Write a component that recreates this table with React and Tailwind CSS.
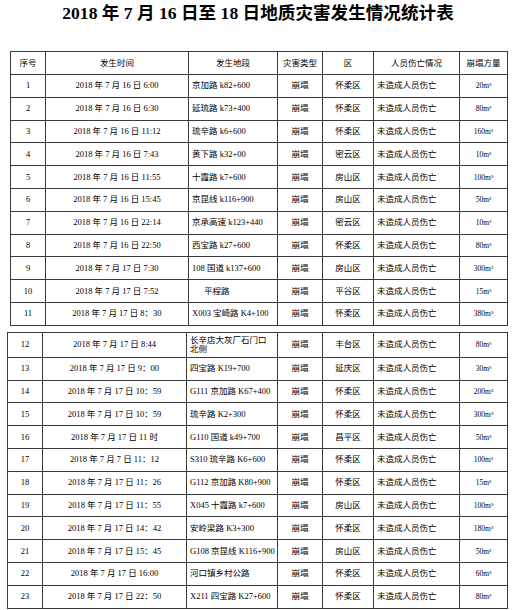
const cols1 = [35, 143, 89, 45, 51, 86, 48];
const cols2 = [35, 144, 91, 45, 51, 86, 48];

const head = ["序号", "发生时间", "发生地段", "灾害类型", "区", "人员伤亡情况", "崩塌方量"];

const rows1 = [
  ["1", "2018 年 7 月 16 日 6:00", "京加路 k82+600", "怀柔区", "20"],
  ["2", "2018 年 7 月 16 日 6:30", "延琉路 k73+400", "怀柔区", "80"],
  ["3", "2018 年 7 月 16 日 11:12", "琉辛路 k6+600", "怀柔区", "160"],
  ["4", "2018 年 7 月 16 日 7:43", "黄下路 k32+00", "密云区", "10"],
  ["5", "2018 年 7 月 16 日 11:55", "十霞路 k7+600", "房山区", "100"],
  ["6", "2018 年 7 月 16 日 15:45", "京昆线 k116+900", "房山区", "50"],
  ["7", "2018 年 7 月 16 日 22:14", "京承高速 k123+440", "密云区", "10"],
  ["8", "2018 年 7 月 16 日 22:50", "西宝路 k27+600", "怀柔区", "80"],
  ["9", "2018 年 7 月 17 日 7:30", "108 国道 k137+600", "房山区", "300"],
  ["10", "2018 年 7 月 17 日 7:52", "平程路", "平谷区", "15", true],
  ["11", "2018 年 7 月 17 日 8：30", "X003 宝崎路 K4+100", "怀柔区", "380"],
];

const rows2 = [
  ["12", "2018 年 7 月 17 日 8:44", "长辛店大灰厂石门口北侧", "丰台区", "80"],
  ["13", "2018 年 7 月 17 日 9：00", "四宝路 K19+700", "延庆区", "30"],
  ["14", "2018 年 7 月 17 日 10：59", "G111 京加路 K67+400", "怀柔区", "200"],
  ["15", "2018 年 7 月 17 日 10：59", "琉辛路 K2+300", "怀柔区", "300"],
  ["16", "2018 年 7 月 17 日 11 时", "G110 国道 k49+700", "昌平区", "50"],
  ["17", "2018 年 7 月 7 日 11：12", "S310 琉辛路 K6+600", "怀柔区", "100"],
  ["18", "2018 年 7 月 17 日 11：26", "G112 京加路 K80+900", "怀柔区", "15"],
  ["19", "2018 年 7 月 17 日 11：55", "X045 十霞路 k7+600", "房山区", "100"],
  ["20", "2018 年 7 月 17 日 14：42", "安岭梁路 K3+300", "怀柔区", "180"],
  ["21", "2018 年 7 月 17 日 15：45", "G108 京昆线 K116+900", "房山区", "50"],
  ["22", "2018 年 7 月 17 日 16:00", "河口镇乡村公路", "怀柔区", "60"],
  ["23", "2018 年 7 月 17 日 22：50", "X211 四宝路 K27+600", "怀柔区", "80"],
];

const td = "border border-[#3a3a3a] px-[3px] py-0 leading-[9px]";

function Table({ cols, rows, header, className }) {
  return (
    <table className={`table-fixed border-collapse ${className}`}>
      <colgroup>
        {cols.map((w, i) => (
          <col key={i} style={{ width: w }} />
        ))}
      </colgroup>
      <tbody>
        {header && (
          <tr className="h-[23px]">
            {head.map((h) => (
              <td key={h} className={`${td} text-center`}>
                {h}
              </td>
            ))}
          </tr>
        )}
        {rows.map((r) => (
          <tr key={r[0]} className={r[0] === "12" ? "h-[25px]" : "h-[22.8px]"}>
            <td className={`${td} text-center`}>{r[0]}</td>
            <td className={`${td} text-center whitespace-nowrap`}>{r[1]}</td>
            <td
              className={`${td} text-left ${r[0] === "12" ? "" : "whitespace-nowrap"} ${
                r[5] ? "pl-[15px]" : ""
              }`}
            >
              {r[2]}
            </td>
            <td className={`${td} text-center`}>崩塌</td>
            <td className={`${td} text-center`}>{r[3]}</td>
            <td className={`${td} text-left whitespace-nowrap`}>未造成人员伤亡</td>
            <td className={`${td} text-center text-[7.5px]`}>{r[4]}m³</td>
          </tr>
        ))}
      </tbody>
    </table>
  );
}

export default function App() {
  return (
    <div
      className="w-[516px] h-[610px] bg-white text-black text-[8.5px] overflow-hidden"
      style={{ fontFamily: '"Liberation Serif", "Noto Sans CJK SC", serif' }}
    >
      <h1 className="pt-[3px] h-[51px] text-center text-[17.6px] font-bold leading-[20px]">
        2018 年 7 月 16 日至 18 日地质灾害发生情况统计表
      </h1>
      <Table cols={cols1} rows={rows1} header className="ml-[10px] w-[497px]" />
      <Table cols={cols2} rows={rows2} className="ml-[7px] mt-[6px] w-[500px]" />
    </div>
  );
}
